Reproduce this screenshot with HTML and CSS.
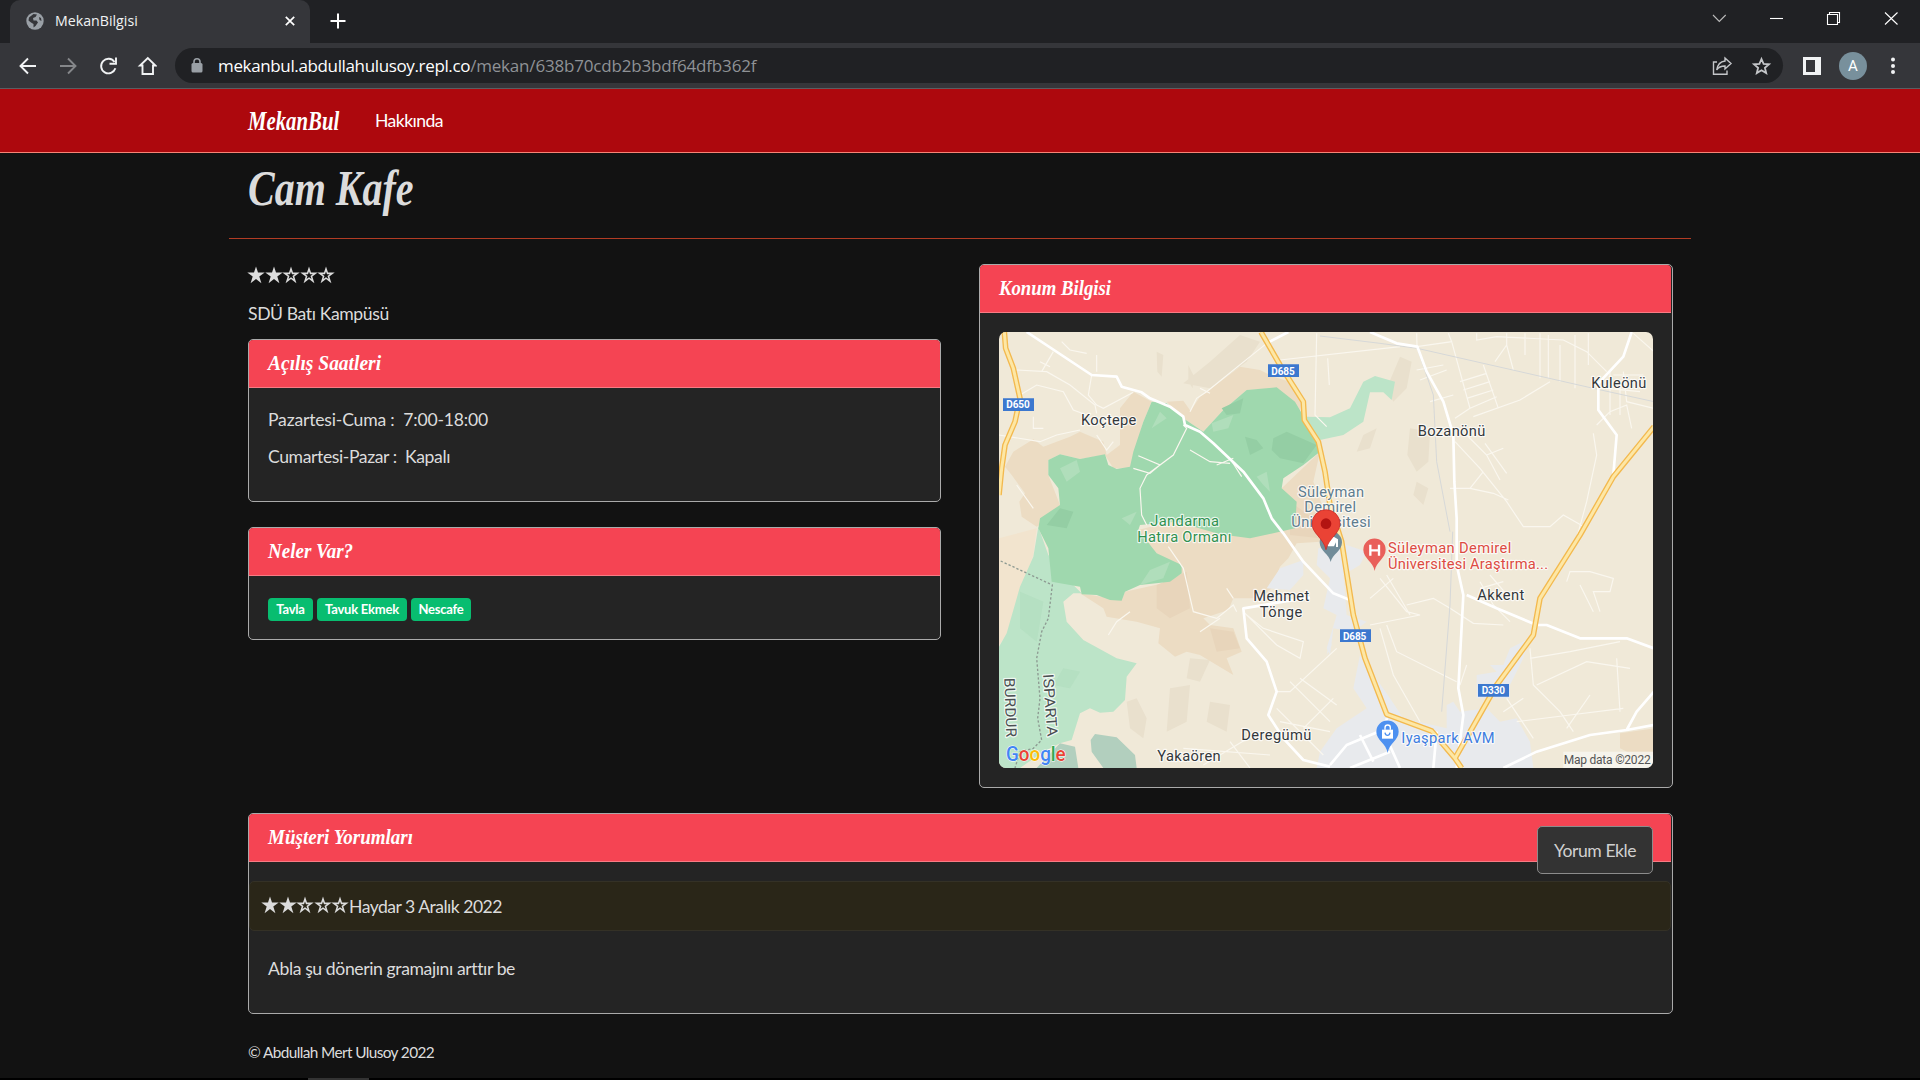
FILE: index.html
```html
<!DOCTYPE html>
<html lang="tr">
<head>
<meta charset="utf-8">
<title>MekanBilgisi</title>
<link rel="stylesheet" href="styles.css">
</head>
<body>
<svg class="defs" width="0" height="0">
  <symbol id="star" viewBox="0 0 18 18"><path d="M9 .4 11 6.500H17.700L12.300 10.600 14.400 17.200 9 13.100 3.600 17.200 5.700 10.600 .3 6.500H7Z" fill="#dcdcdc"/></symbol>
  <symbol id="star-o" viewBox="0 0 18 18"><path fill-rule="evenodd" d="M9 .4 11 6.500H17.700L12.300 10.600 14.400 17.200 9 13.100 3.600 17.200 5.700 10.600 .3 6.500H7ZM9 5.500 8 8.200H5.200L7.500 10 6.500 13 9 11.200 11.500 13 10.500 10 12.800 8.200H10Z" fill="#dcdcdc"/></symbol>
</svg>

<header class="browser">
  <div class="tabstrip">
    <div class="tab">
      <svg class="globe" width="18" height="18" viewBox="0 0 18 18"><circle cx="9" cy="9" r="8.700" fill="#9aa0a6"/><path d="M3 5.500 7.500 2 11 2.500 9.500 5 7 6 7.500 8.500H10.500L12 10.500 9.500 14 7.500 15.500 7.500 12 5 10.500 2.500 8.500ZM13 5 15 6 15.500 9 13.500 8Z" fill="#35363a"/></svg>
      <span class="tab-title">MekanBilgisi</span>
      <svg class="tab-close" width="10" height="10" viewBox="0 0 10 10"><path d="M.8.8 9.200 9.200M9.200.8.8 9.200" stroke="#fff" stroke-width="1.700"/></svg>
    </div>
    <svg class="newtab" width="16" height="16" viewBox="0 0 16 16"><path d="M8 .5V15.500M.5 8H15.500" stroke="#fff" stroke-width="2"/></svg>
    <svg class="wincontrols" width="186" height="16" viewBox="0 0 186 16"><g fill="none" stroke="#fff" stroke-width="1.100"><path d="M1 5 7.300 11.500 13.700 5" stroke="#bbb"/><path d="M58 8.500H71"/><path d="M115.500 4.500H125.500V14.500H115.500ZM117.500 4.500V2.500H127.500V12.500H125.500"/><path d="M173 2.500 185.500 14.500M185.500 2.500 173 14.500"/></g></svg>
  </div>
  <div class="toolbar">
    <svg class="nav-icons" width="138" height="20" viewBox="0 0 138 20"><g fill="none" stroke="#f1f3f4" stroke-width="1.900"><path d="M17 10H1.500M9 2.500 1.500 10 9 17.500"/><path d="M41 10H56.500M49 2.500 56.500 10 49 17.500" stroke="#85878a"/><path d="M95.500 6A7.300 7.300 0 1 0 96.400 12.300M97 1.500V7.800H90.500"/><path d="M123.500 18V9.500H121L128.800 2 136.500 9.500H134V18Z"/></g></svg>
    <div class="omnibox">
      <svg width="12" height="15" viewBox="0 0 12 15"><rect x=".5" y="5" width="11" height="9.500" rx="1.500" fill="#9aa0a6"/><path d="M3 6V3.800A3 3 0 0 1 9 3.800V6" fill="none" stroke="#9aa0a6" stroke-width="1.600"/></svg>
      <span class="url"><span class="host">mekanbul.abdullahulusoy.repl.co</span><span class="path">/mekan/638b70cdb2b3bdf64dfb362f</span></span>
      <svg width="60" height="20" viewBox="0 0 60 20"><g fill="none" stroke="#c4c6c9" stroke-width="1.400"><path d="M5 6H1.500V18.300H15V14.500"/><path d="M13 2 19 7.500 13 13V10C9 10 6.500 11 4.700 14 5.500 9 8.500 5.500 13 5Z"/><path stroke-width="1.800" d="M49.500 3 51.600 7.900 57 8.300 52.900 11.800 54.200 17 49.500 14.200 44.800 17 46.100 11.800 42 8.300 47.400 7.900Z"/></g></svg>
    </div>
    <svg width="18" height="18" viewBox="0 0 18 18"><path fill-rule="evenodd" fill="#f1f3f4" d="M0 0H18V18H0ZM3 3V15H12V3Z"/></svg>
    <span class="avatar">A</span>
    <svg width="4" height="18" viewBox="0 0 4 18"><g fill="#f1f3f4"><circle cx="2" cy="2.500" r="2"/><circle cx="2" cy="9" r="2"/><circle cx="2" cy="15" r="2"/></g></svg>
  </div>
</header>

<nav class="navbar">
  <a class="brand"><span class="t-brand">MekanBul</span></a>
  <a class="navlink">Hakkında</a>
</nav>

<main class="container">
  <div class="page-title"><h1><span class="t-title">Cam Kafe</span></h1></div>
  <div class="columns">
    <div class="col">
      <div class="stars"><svg><use href="#star"/></svg><svg><use href="#star"/></svg><svg><use href="#star-o"/></svg><svg><use href="#star-o"/></svg><svg><use href="#star-o"/></svg></div>
      <p class="address">SDÜ Batı Kampüsü</p>
      <section class="panel hours">
        <h2><span class="t-hours">Açılış Saatleri</span></h2>
        <p class="t-week">Pazartesi-Cuma :&nbsp; 7:00-18:00</p>
        <p class="t-weekend">Cumartesi-Pazar :&nbsp; Kapalı</p>
      </section>
      <section class="panel offers">
        <h2><span class="t-offers">Neler Var?</span></h2>
        <div class="badges"><span class="badge w1">Tavla</span><span class="badge w2">Tavuk Ekmek</span><span class="badge w3">Nescafe</span></div>
      </section>
    </div>
    <section class="panel location">
      <h2><span class="t-loc">Konum Bilgisi</span></h2>
      <svg class="map" width="654" height="436" viewBox="87 231 1962 1308">
        <rect x="87" y="231" width="1965" height="1308" fill="#f0e9d8"/>
        <g fill="#e9e0cd">
          <path d="M810 240 870 260 830 320 720 400 640 385 720 320ZM560 290 580 300 575 365 562 350ZM655 330 670 360 668 400 655 380ZM1320 520 1380 530 1375 620 1340 650 1312 600ZM1290 305 1325 320 1310 400 1270 440 1250 400ZM1180 540 1220 520 1200 580 1160 590ZM1340 680 1375 700 1360 750 1330 720Z"/>
          <path d="M470 1340 500 1330 530 1390 520 1450 480 1420ZM600 1300 660 1290 650 1400 590 1430ZM660 1210 720 1215 690 1280 650 1270ZM720 1340 780 1350 770 1430 710 1400Z"/>
        </g>
        <g fill="#ecdcc3">
          <path d="M490 410 545 440 520 500 480 640 430 640 405 600 330 612 270 598 235 615 235 660 270 750 240 790 200 815 155 785 148 740 165 715 125 660 105 635 130 590 190 553 220 575 300 545 330 530 400 560 410 600 450 570 450 460Z"/>
          <path d="M590 440 640 437 670 480 660 470 690 425 810 335 870 345 910 365 960 380 995 440 990 470 920 400 830 405 760 465 700 530 640 490Z"/>
          <path d="M1050 590 1030 680 1060 760 1050 860 980 865 955 910 930 935 905 1000 870 1030 790 1030 775 1065 700 1090 720 1110 790 1120 815 1190 770 1210 790 1260 690 1200 650 1190 615 1205 565 1165 570 1120 500 1100 410 1085 400 1060 330 1015 455 1035 465 1010 600 980 635 935 550 890 505 825 600 800 800 835 975 820 935 700Z"/>
          <path d="M87 850 200 820 190 900 110 1140 87 1170Z" fill="#f2e4ce"/>
          <path d="M1950 1435 2052 1420V1500H1990L1950 1480Z"/>
        </g>
        <path fill="#e8d5bb" d="M560 990 650 950 660 1060 600 1090 560 1060ZM960 740 1030 790 1050 850 960 840ZM720 1120 790 1130 810 1180 740 1190Z"/>
        <path fill="#bce4c8" d="M205 815 190 905 150 995 110 1135 87 1175V1539H150L220 1490 270 1465 305 1455 330 1375 360 1360 390 1373 430 1370 465 1335 470 1265 500 1225 440 1210 340 1155 290 1100 280 1040 310 1015 335 1015 300 980 235 900ZM1010 485 1080 487 1140 460 1180 380 1215 363 1275 380 1265 435 1240 412 1200 412 1180 500 1120 540 1050 555 1010 510Z"/>
        <path fill="#9fd8ae" d="M545 440 590 445 640 490 700 530 760 465 830 405 920 397 975 440 1010 500 1050 570 1050 590 1000 630 940 670 935 700 980 740 975 820 840 850 750 838 620 800 510 810 505 825 560 895 635 930 635 955 600 980 510 990 465 1010 455 1037 420 1035 380 1020 335 1018 330 995 245 980 235 880 205 820 210 790 270 750 265 700 235 660 235 615 270 598 330 612 405 598 415 630 440 642 480 635 490 590 520 500Z"/>
        <g fill="#94cea4"><path d="M910 550 950 530 1040 570 1000 625 930 610 905 585ZM825 545 860 555 880 580 840 600ZM270 760 310 770 290 820 230 810ZM755 460 820 430 810 475 770 480Z"/></g>
        <g fill="#b0debb"><path d="M725 505 790 480 775 520 730 530ZM545 520 570 470 590 490ZM270 640 320 615 330 650 290 680ZM860 665 890 650 900 710 880 690ZM540 945 600 920 580 970 510 990ZM455 790 500 770 480 810Z"/></g>
        <g fill="#aedbbb"><path d="M150 1010 220 1040 200 1160 150 1120ZM250 1290 280 1240 330 1250 300 1300Z" opacity=".5"/></g>
        <path fill="#b2cfbe" d="M375 1437 440 1447 495 1500 500 1539H400L365 1490 362 1455ZM270 1465 315 1475 325 1539H200Z"/>
        <g fill="#e8eaed">
          <path d="M930 940 1000 915 1000 960 960 1005 890 1000ZM1045 880 1130 870 1190 890 1170 930 1120 960 1130 1080 1190 1100 1150 1130 1090 1120 1080 1200 1070 1180 1100 1080 1060 1060 1080 970 1040 930Z"/>
          <path d="M1170 1200 1260 1330 1300 1390 1430 1420 1430 1350 1450 1340 1470 1370 1550 1360 1590 1400 1640 1390 1680 1460 1690 1539H1040L1050 1490 1100 1420 1190 1360 1150 1300ZM1520 1260 1580 1250 1560 1230 1600 1230 1620 1180 1680 1150 1660 1210 1620 1290 1620 1330 1520 1330Z"/>
          <path d="M1080 1150 1070 1200 1085 1170Z"/>
        </g>
        <g fill="none" stroke="#faf7ef" stroke-width="3.500">
          <path d="M140 345 230 350 300 390 375 450 380 475M150 420 200 390 280 410 310 465 350 480M250 290 215 350M380 300 380 350M365 360 355 420 380 450 400 460 490 412M87 540 210 560 260 540 330 525M210 320 240 335M275 260 300 285 350 295M190 485 190 520 220 520M380 540 410 585 430 560M140 690 190 760"/>
          <path d="M640 510 650 520 610 600 530 660 510 700 515 780 530 810M505 602 570 630 540 655 490 640M660 585 720 620 780 625M740 630 790 610M780 610 815 665M660 470 680 430 710 410 815 325 890 265M690 400 720 415"/>
          <path d="M1040 235 1035 480 1070 515M930 315 1290 275M1073 310 1078 390M1340 235 1341 275 1445 260 1435 235M1445 260 1500 460 1455 490M1340 345 1420 330M1350 375 1430 345M1380 440 1450 420M1470 380 1550 355M1480 405 1560 380M1490 430 1570 405M1500 460 1580 425M1540 330 1585 460M1510 485 1650 435 1740 380M1520 235 1520 255 1580 245 1780 255 1850 290 1910 350M1575 320 1610 270 1630 345M1610 235V270M1665 235V300M1710 235V370M1735 240V370M1770 270V380M1815 240V400M1855 235V330"/>
          <path d="M1455 560 1530 640 1610 740 1660 815 1740 815 1780 780 1850 820M1490 540 1550 600 1590 675M1545 565 1610 655M1550 600 1600 580M1440 700 1500 700 1540 650M1500 700 1570 715 1615 735M1870 535 1880 600 1850 740 1820 850M1880 510 1920 470 1970 450 1985 520M1920 350V480M1950 380V480M1990 235 2052 290M1960 350 1970 440 2052 460M1910 400 2010 410M1930 360 2020 360"/>
          <path d="M1230 970 1310 1070 1350 1080 1200 1110M1250 960 1320 1080M1200 1030 1270 970M1310 1050 1390 1030 1440 1060 1510 1105 1600 1110M1250 1110 1280 1190 1460 1280M1230 1120 1270 1260 1350 1400M1470 1290 1490 1230M1530 980 1570 1050 1620 1100M1560 960 1620 1030M1530 1000 1600 980"/>
          <path d="M1790 980 1800 950 1860 950 1930 970 1920 1010 1870 1010 1890 1070M1830 990 1870 1070M1680 1180 1690 1290 1770 1370 1810 1430M1680 1210 1800 1190 1950 1160M1700 1290 1850 1220 1980 1240M1610 1330 1690 1450M1640 1400 1800 1380 1960 1360M1790 1420 1860 1320M1940 1210 1950 1370M1600 1370 1660 1330"/>
          <path d="M595 875 640 940 670 1070 740 1090 790 1050 800 1070M770 1000 790 1030M415 1140 440 1100 480 1070M820 1070 920 1170 990 1210 1000 1160 880 1120 830 1080M690 1130 750 1090M920 1310 960 1310 1100 1180M990 1270 1100 1350M960 1280 1080 1400M920 1360 1060 1500M930 1400 1080 1430M1000 1420 1090 1330M640 1480 900 1500M780 1460 840 1539M700 1530 850 1440"/>
        </g>
        <path fill="none" stroke="#d6d8d8" stroke-width="3" d="M1050 243 1230 265 1342 280 1870 400 2052 440M1342 280 1390 420 1400 620 1440 830M1448 830 1440 1050 1415 1370"/>
        <g fill="none" stroke="#fff" stroke-width="8" stroke-linejoin="round">
          <path d="M170 231 365 360 440 365 455 395 515 412 540 430 600 455 640 485 645 510 690 530 730 565 820 650 880 730 905 790 940 835 1000 920 1090 1015 1140 1035"/>
          <path d="M890 265 955 231M1200 231 1280 265 1342 275 1370 350 1420 440 1450 540 1453 680 1460 790 1460 930 1480 1020 1465 1300 1480 1380 1460 1539M1985 231 1960 305 1885 385 1885 465 1940 540 1930 660"/>
          <path d="M1020 1028 940 1040 820 1060 830 1150 890 1220 920 1310 895 1380 940 1450 1000 1515 1080 1535M1490 1020 1580 1060 1700 1110 1730 1110 1830 1150 1970 1150 2052 1180M1600 1539 1700 1490 1860 1440 1970 1425 2052 1410M1970 1425 2000 1370 2052 1310M1080 1530 1130 1470 1250 1420M1170 1440 1210 1520M1250 1390 1250 1450 1290 1539M1140 1539 1260 1490M1400 1430 1390 1539"/>
        </g>
        <g fill="none" stroke-linejoin="round">
          <g stroke="#f3b94e" stroke-width="17"><path d="M103 231 107 280 130 340 150 430 135 500 105 570 95 640 87 720"/><path d="M873 231 930 330 1000 440 1003 495 1045 560 1065 650 1080 750 1115 860 1150 1080 1185 1210 1250 1378 1385 1428 1455 1510 1475 1539"/><path d="M2052 515 1930 665 1830 840 1710 1030 1690 1140 1580 1290 1455 1510"/></g>
          <g stroke="#fde7a5" stroke-width="9"><path d="M103 231 107 280 130 340 150 430 135 500 105 570 95 640 87 720"/><path d="M873 231 930 330 1000 440 1003 495 1045 560 1065 650 1080 750 1115 860 1150 1080 1185 1210 1250 1378 1385 1428 1455 1510 1475 1539"/><path d="M2052 515 1930 665 1830 840 1710 1030 1690 1140 1580 1290 1455 1510"/></g>
        </g>
        <path fill="none" stroke="#8d9a92" stroke-width="4" stroke-dasharray="7 6" d="M92 918 247 990 235 1090 215 1130 200 1210 210 1330 203 1390 215 1455 190 1480 150 1490 135 1539"/>
        <g fill="#3c78cf"><path d="M894 328H987V366H894ZM99 430H192V468H99ZM1110 1123H1203V1161H1110ZM1524 1287H1617V1325H1524Z"/></g>
        <g class="shield"><text x="904" y="360" textLength="70">D685</text><text x="109" y="458" textLength="70">D650</text><text x="1119" y="1154" textLength="70">D685</text><text x="1535" y="1318" textLength="70">D330</text></g>
        <g class="place">
          <text x="333" y="510" textLength="166">Koçtepe</text><text x="1343" y="542" textLength="203">Bozanönü</text><text x="1864" y="398" textLength="165">Kuleönü</text>
          <text x="850" y="1039" textLength="168">Mehmet</text><text x="869" y="1085" textLength="128">Tönge</text><text x="1522" y="1035" textLength="141">Akkent</text><text x="814" y="1454" textLength="210">Deregümü</text><text x="562" y="1518" textLength="190">Yakaören</text>
          <g fill="#2f9150"><text x="541" y="813" textLength="206">Jandarma</text><text x="502" y="860" textLength="282">Hatıra Ormanı</text></g>
          <g fill="#5e7c8e"><text x="984" y="726" textLength="198">Süleyman</text><text x="1003" y="771" textLength="155">Demirel</text><text x="964" y="817" textLength="238">Üniversitesi</text></g>
          <g fill="#dd4b42"><text x="1254" y="894" textLength="370">Süleyman Demirel</text><text x="1254" y="941" textLength="480">Üniversitesi Araştırma...</text></g>
          <text x="1294" y="1464" textLength="280" fill="#3d7de0">Iyaşpark AVM</text>
          <g fill="#4a4f52"><text transform="translate(219 1258) rotate(86)" textLength="188" lengthAdjust="spacingAndGlyphs">ISPARTA</text><text transform="translate(103 1269) rotate(88)" textLength="178" lengthAdjust="spacingAndGlyphs">BURDUR</text></g>
        </g>
        <path d="M1082 921C1078 898 1049 888 1049 862A33 33 0 0 1 1116 862C1116 888 1087 898 1082 921Z" fill="#718c99"/><path d="M1068 862V853L1086 842 1104 853V876H1098V862L1092 874H1074Z" fill="#fff"/>
        <path d="M1068 884C1060 848 1026 836 1026 806A42 42 0 0 1 1110 806C1110 836 1076 848 1068 884Z" fill="#ea4335" stroke="#c5221f" stroke-width="2"/><circle cx="1068" cy="806" r="16" fill="#b31412"/>
        <path d="M1214 948C1210 920 1180 910 1180 884A33 33 0 0 1 1247 884C1247 910 1218 920 1214 948Z" fill="#e9605a"/><path d="M1201 869V902M1227 869V902M1201 886H1227" stroke="#fff" stroke-width="7"/>
        <path d="M1253 1494C1249 1464 1219 1456 1219 1430A33 33 0 0 1 1286 1430C1286 1456 1257 1464 1253 1494Z" fill="#4d90f0"/><path d="M1236 1424H1269V1451H1236Z" fill="#fff"/><path d="M1245 1424V1418A8 8 0 0 1 1261 1418V1424" fill="none" stroke="#fff" stroke-width="4"/><path d="M1245 1433C1247 1444 1258 1444 1260 1433" fill="none" stroke="#4d90f0" stroke-width="4"/>
        <text class="google" x="108" y="1518" textLength="179" lengthAdjust="spacingAndGlyphs"><tspan fill="#4285f4">G</tspan><tspan fill="#ea4335">o</tspan><tspan fill="#fbbc05">o</tspan><tspan fill="#4285f4">g</tspan><tspan fill="#34a853">l</tspan><tspan fill="#ea4335">e</tspan></text>
        <path d="M1780 1490H2052V1539H1780Z" fill="#f8f6f1" opacity=".8"/><text class="credit" x="1781" y="1526" textLength="261">Map data ©2022</text>
      </svg>
    </section>
  </div>

  <section class="panel reviews">
    <h2><span class="t-rev">Müşteri Yorumları</span><button>Yorum Ekle</button></h2>
    <div class="review-head"><div class="stars"><svg><use href="#star"/></svg><svg><use href="#star"/></svg><svg><use href="#star-o"/></svg><svg><use href="#star-o"/></svg><svg><use href="#star-o"/></svg></div><span class="author">Haydar 3 Aralık 2022</span></div>
    <p>Abla şu dönerin gramajını arttır be</p>
  </section>
  <footer>© Abdullah Mert Ulusoy 2022</footer>
</main>
<div class="taskbar"><span></span></div>
</body>
</html>
```

FILE: styles.css
```css
* { box-sizing: border-box; }
html, body { margin: 0; height: 100%; }
body { display: flex; flex-direction: column; height: 1080px; overflow: hidden; background: #121212; color: #dcdcdc; font: 17.6px/25px Lato, "Liberation Sans", sans-serif; letter-spacing: -.4px; }
.defs { position: absolute; }
svg { display: block; flex: none; letter-spacing: 0; }
h1, h2, p { margin: 0; }

/* browser frame */
.browser { flex: none; height: 89px; border-bottom: 1px solid #5b5e62; background: #35363a; font-family: "Open Sans", "Noto Sans", sans-serif; letter-spacing: 0; }
.tabstrip { display: flex; height: 43px; padding: 0 22px 0 10px; background: #202124; }
.tab { display: flex; align-items: center; width: 300px; height: 43px; padding: 0 15px 2px 16px; border-radius: 10px 10px 0 0; background: #35363a; }
.tab-title { margin-left: 11px; color: #f1f3f4; font-size: 14.2px; letter-spacing: 0; }
.tab-close { margin-left: auto; }
.newtab { margin: 13px 0 0 20px; }
.wincontrols { margin: 10px 0 0 auto; }
.toolbar { display: flex; align-items: center; height: 45px; padding: 0 25px 0 19px; }
.omnibox { display: flex; align-items: center; width: 1610px; height: 35px; margin: 0 20px 0 18px; padding: 0 11px 0 16px; border-radius: 18px; background: #202124; }
.url { flex: 1; margin-left: 15px; font-size: 17px; white-space: nowrap; }
.host { color: #fff; letter-spacing: -.36px; }
.path { color: #8f9296; letter-spacing: -.18px; }
.avatar { width: 28px; height: 28px; margin: 0 24px 0 18px; border-radius: 50%; background: #78909c; color: #fff; font: 15px/29px Roboto, sans-serif; text-align: center; }

/* site header */
.navbar { display: flex; flex: none; height: 64px; padding: 0 248px; border-bottom: 1px solid #f58476; background: #ad080d; color: #fff; line-height: 64px; }
.navlink { letter-spacing: -.55px; }
.brand, h1, h2 { font-family: "Liberation Serif", serif; font-style: italic; font-weight: 700; letter-spacing: 0; white-space: nowrap; }
.brand { width: 127px; font-size: 27px; }
/* narrowed display lettering */
.brand span, h1 span, h2 span { display: inline-block; transform-origin: 0 50%; }
.t-brand { transform: scaleX(.77); }
.t-title { transform: scaleX(.8); }
.t-hours { transform: scaleX(.885); }
.t-offers { transform: scaleX(.865); }
.t-loc { transform: scaleX(.852); }
.t-rev { transform: scaleX(.865); }

.container { display: flex; flex: 1; flex-direction: column; width: 1462px; margin: 0 auto; padding: 0 18px 0 19px; }
.page-title { height: 86px; margin: 0 -18px 0 -19px; padding: 5px 19px 0; border-bottom: 1px solid #b23c24; }
h1 { font-size: 50px; line-height: 60px; }
.columns { display: flex; gap: 38px; height: 524px; margin-top: 25px; }
.col { width: 693px; }
.stars { display: flex; margin-left: -1px; }
.stars svg { width: 18px; height: 18px; margin-right: -.4px; }
.col > .stars { margin-top: 2px; }
.address { margin: 17px 0 13px; }

.panel { border: 1px solid #aaa; border-radius: 5px; background: #242424; }
.panel h2 { height: 48px; padding-left: 19px; border-bottom: 1px solid #f87b84; border-radius: 4px 4px 0 0; background: #f54453; color: #fff; font-size: 22px; line-height: 46px; }
.hours { height: 163px; margin-bottom: 25px; }
.hours p { padding: 19px 19px 0; }
.hours p + p { padding-top: 12px; }
.hours .t-week { letter-spacing: -.19px; }
.offers { height: 113px; }
.badges { display: flex; gap: 4px; padding: 22px 19px; letter-spacing: -.22px; }
.badge { height: 23px; border-radius: 4px; background: #08bd70; color: #fff; font-size: 13px; font-weight: 700; line-height: 22px; text-align: center; white-space: nowrap; }
.w1 { width: 45px; }
.w2 { width: 90px; }
.w3 { width: 60px; }
.location { width: 694px; height: 524px; }
.location h2, .reviews h2 { margin-right: 1px; }
.map { margin: 19px; border-radius: 7px; }
.map text { font-family: Roboto, sans-serif; }
.place text { font-size: 44px; stroke: #fff; stroke-width: 7px; stroke-opacity: .75; paint-order: stroke; stroke-linejoin: round; }
.place { fill: #33383c; }
.shield { fill: #fff; font-size: 30px; font-weight: 700; }
.google { font-size: 62px; font-weight: 500; stroke: #fff; stroke-width: 3px; paint-order: stroke; }
.credit { fill: #555; font-size: 36px; }

.reviews { height: 201px; margin-top: 25px; }
.reviews h2 { display: flex; justify-content: space-between; align-items: flex-start; padding-right: 18px; }
button { width: 116px; height: 48px; margin-top: 12px; padding: 0; border: 1px solid #8c8c8c; border-radius: 5px; background: #333; color: #d0d0d0; font: 17.6px/48px Lato, sans-serif; letter-spacing: -.47px; }
.review-head { display: flex; align-items: center; height: 50px; margin: 19px 1px 0 0; padding-left: 12px; border: 1px solid #343126; border-radius: 5px; background: #2a2618; }
.review-head .stars { margin-top: -2px; }
.author { letter-spacing: -.52px; }
.reviews p { padding: 25px 19px; }
footer { margin-top: 26px; font-size: 15.4px; letter-spacing: -.62px; }
.taskbar { flex: none; height: 2px; background: #000; }
.taskbar span { display: block; width: 61px; height: 2px; margin-left: 308px; background: #333; }
```
